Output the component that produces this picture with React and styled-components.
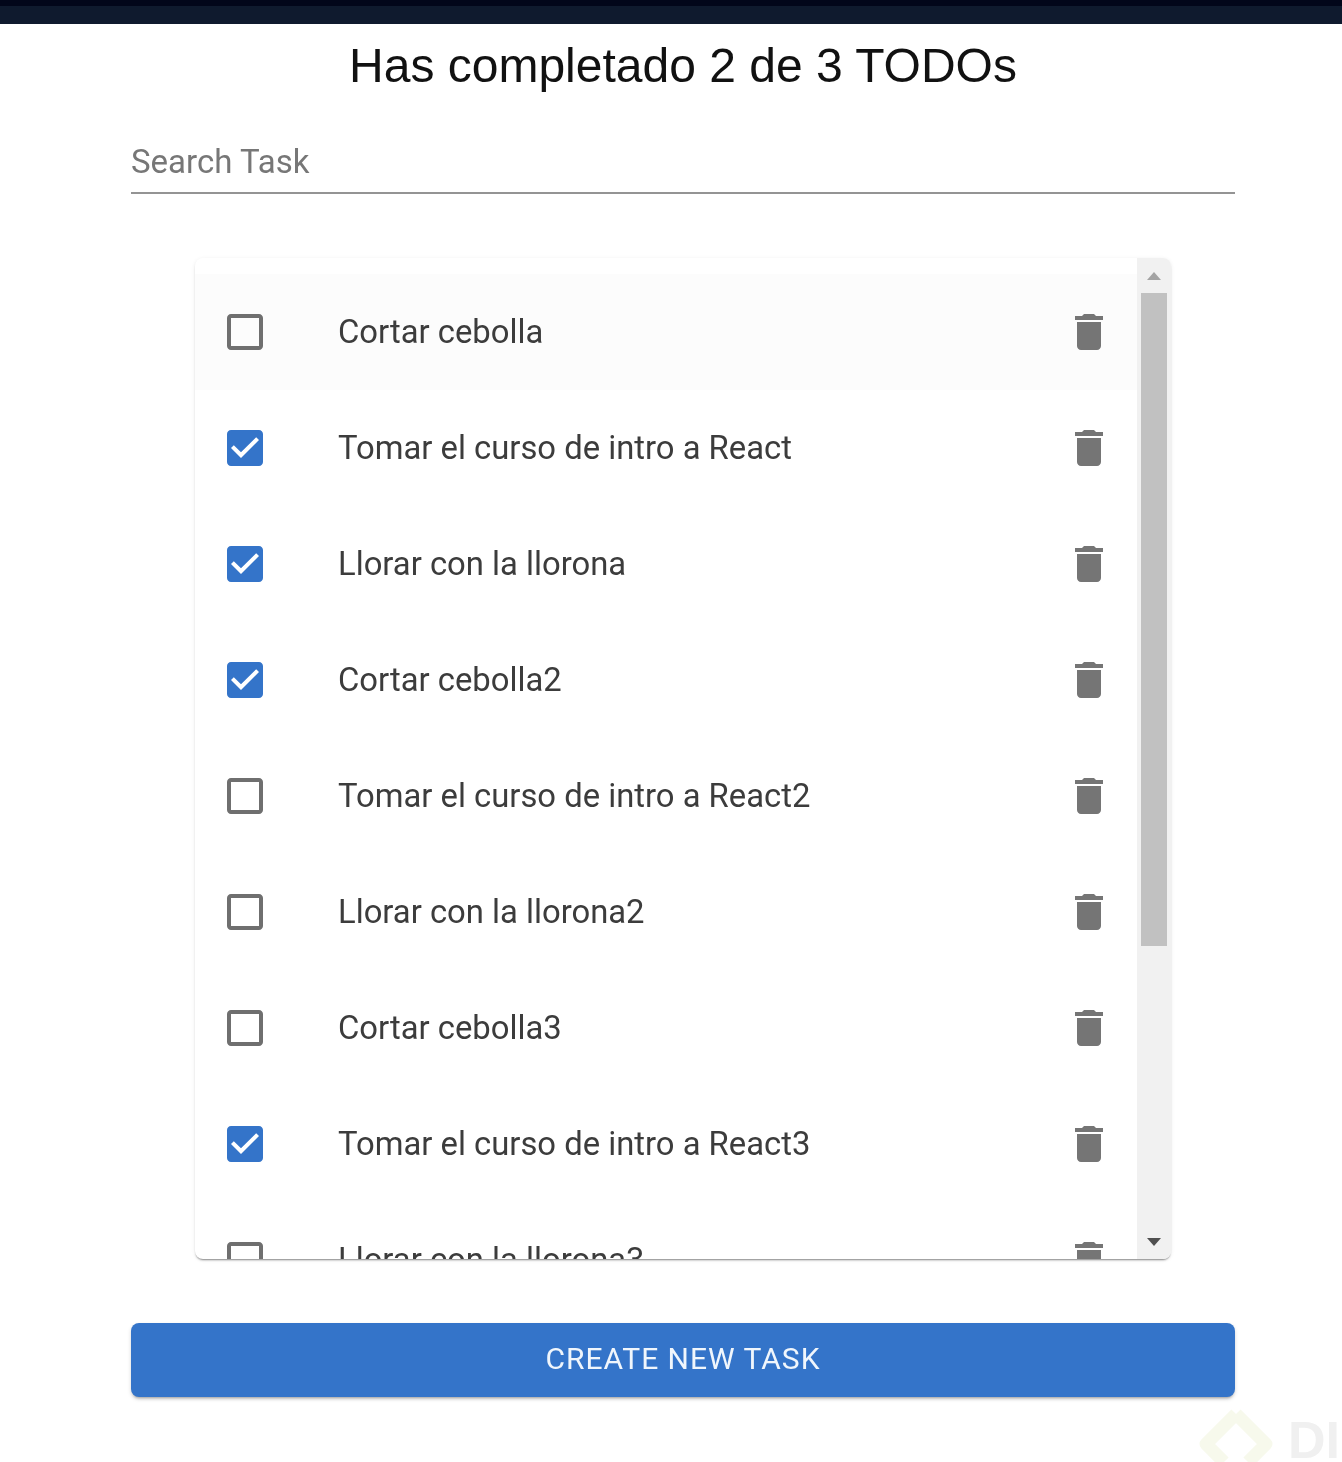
import React from "react";
import styled, { createGlobalStyle } from "styled-components";

const TODOS = [
  { text: "Cortar cebolla", completed: false, hovered: true },
  { text: "Tomar el curso de intro a React", completed: true },
  { text: "Llorar con la llorona", completed: true },
  { text: "Cortar cebolla2", completed: true },
  { text: "Tomar el curso de intro a React2", completed: false },
  { text: "Llorar con la llorona2", completed: false },
  { text: "Cortar cebolla3", completed: false },
  { text: "Tomar el curso de intro a React3", completed: true },
  { text: "Llorar con la llorona3", completed: false },
];

const GlobalStyle = createGlobalStyle`
  html, body {
    margin: 0;
    padding: 0;
    background: #fff;
  }
  body {
    font-family: Roboto, "Liberation Sans", sans-serif;
  }
`;

const App = () => {
  return (
    <Page>
      <GlobalStyle />
      <TopBar />
      <Content>
        <Title>Has completado 2 de 3 TODOs</Title>
        <SearchField>
          <SearchInput placeholder="Search Task" />
        </SearchField>
        <Paper>
          <List>
            {TODOS.map(todo => (
              <Row key={todo.text} hovered={todo.hovered}>
                <CheckIcon completed={todo.completed} viewBox="0 0 24 24">
                  {todo.completed ? (
                    <path d="M19 3H5c-1.11 0-2 .9-2 2v14c0 1.1.89 2 2 2h14c1.11 0 2-.89 2-2V5c0-1.1-.89-2-2-2zm-9 14l-5-5 1.41-1.41L10 14.17l7.59-7.59L19 8l-9 9z" />
                  ) : (
                    <path d="M19 5v14H5V5h14m0-2H5c-1.1 0-2 .9-2 2v14c0 1.1.9 2 2 2h14c1.1 0 2-.9 2-2V5c0-1.1-.9-2-2-2z" />
                  )}
                </CheckIcon>
                <RowText>{todo.text}</RowText>
                <TrashIcon viewBox="0 0 24 24">
                  <path d="M6 19c0 1.1.9 2 2 2h8c1.1 0 2-.9 2-2V7H6v12zM19 4h-3.5l-1-1h-5l-1 1H5v2h14V4z" />
                </TrashIcon>
              </Row>
            ))}
          </List>
          <Scrollbar>
            <ArrowBox>
              <Arrow viewBox="0 0 14 8">
                <path d="M0 8L7 0l7 8z" />
              </Arrow>
            </ArrowBox>
            <Thumb />
            <TrackRest />
            <ArrowBox>
              <Arrow dark viewBox="0 0 14 8">
                <path d="M0 0l7 8 7-8z" />
              </Arrow>
            </ArrowBox>
          </Scrollbar>
        </Paper>
        <CreateButton>CREATE NEW TASK</CreateButton>
      </Content>
      <Watermark>
        <svg width="80" height="56" viewBox="0 0 80 56">
          <path
            d="M38 8L8 38l18 18M38 8l30 30-18 18"
            fill="none"
            stroke="#f7f9ec"
            strokeWidth="13"
            strokeLinejoin="round"
          />
        </svg>
        <WatermarkText>DI</WatermarkText>
      </Watermark>
    </Page>
  );
};

const Page = styled.div`
  position: relative;
  width: 1342px;
  height: 1462px;
  overflow: hidden;
  background: #fff;
  filter: blur(0.6px);
`;

const TopBar = styled.div`
  width: 100%;
  height: 18px;
  border-top: 6px solid #02061a;
  background: #0f1a2e;
`;

const Content = styled.div`
  display: flex;
  flex-direction: column;
  align-items: center;
  padding-left: 24px;
`;

const Title = styled.h1`
  margin: 15px 0 0;
  font-family: "Liberation Sans", Arial, sans-serif;
  font-size: 48px;
  font-weight: 400;
  line-height: 54px;
  color: #111;
  text-align: center;
`;

const SearchField = styled.div`
  width: 1104px;
  margin-top: 45px;
  padding-bottom: 8px;
  border-bottom: 2px solid #949494;
`;

const SearchInput = styled.input`
  display: block;
  width: 100%;
  height: 46px;
  padding: 0;
  border: 0;
  outline: 0;
  background: transparent;
  font-family: Roboto, sans-serif;
  font-size: 33px;
  color: #222;

  &::placeholder {
    color: #777;
    opacity: 1;
  }
`;

const Paper = styled.div`
  display: flex;
  width: 976px;
  height: 1001px;
  margin-top: 64px;
  overflow: hidden;
  border-radius: 8px;
  background: #fff;
  box-shadow: 0 2px 2px -1px rgba(0, 0, 0, 0.45), 0 1px 4px rgba(0, 0, 0, 0.08);
`;

const List = styled.div`
  flex: 1;
  min-width: 0;
  padding-top: 16px;
  overflow: hidden;
`;

const Row = styled.div`
  display: flex;
  align-items: center;
  height: 116px;
  padding: 0 24px 0 26px;
  background: ${({ hovered }) => (hovered ? "#fcfcfc" : "transparent")};
`;

const CheckIcon = styled.svg`
  flex: none;
  width: 48px;
  height: 48px;
  fill: ${({ completed }) => (completed ? "#3474c9" : "#6f6f6f")};
`;

const RowText = styled.span`
  flex: 1;
  margin-left: 69px;
  font-family: Roboto, sans-serif;
  font-size: 32.8px;
  line-height: 48px;
  color: #3c3c3c;
  white-space: nowrap;
`;

const TrashIcon = styled.svg`
  flex: none;
  width: 48px;
  height: 48px;
  fill: #757575;
`;

const Scrollbar = styled.div`
  display: flex;
  flex: none;
  flex-direction: column;
  align-items: center;
  width: 34px;
  background: #f1f1f1;
`;

const ArrowBox = styled.div`
  display: flex;
  flex: none;
  align-items: center;
  justify-content: center;
  width: 100%;
  height: 35px;
`;

const Arrow = styled.svg`
  width: 14px;
  height: 8px;
  fill: ${({ dark }) => (dark ? "#505050" : "#a3a3a3")};
`;

const Thumb = styled.div`
  flex: none;
  width: 26px;
  height: 653px;
  background: #c1c1c1;
`;

const TrackRest = styled.div`
  flex: 1;
`;

const CreateButton = styled.button`
  width: 1104px;
  height: 74px;
  margin-top: 64px;
  padding: 0 0 3px;
  border: 0;
  border-radius: 8px;
  background: #3474c9;
  box-shadow: 0 3px 3px -2px rgba(0, 0, 0, 0.3), 0 2px 4px rgba(0, 0, 0, 0.14);
  font-family: Roboto, sans-serif;
  font-size: 30px;
  font-weight: 400;
  letter-spacing: 1px;
  color: #f0f6fc;
`;

const Watermark = styled.div`
  position: absolute;
  left: 1198px;
  top: 1403px;
  display: flex;
  align-items: flex-end;
  gap: 10px;
  height: 59px;
  pointer-events: none;
`;

const WatermarkText = styled.span`
  font-family: "Liberation Sans", sans-serif;
  font-size: 52px;
  font-weight: 700;
  line-height: 44px;
  color: #f0f0f0;
`;

export default App;
